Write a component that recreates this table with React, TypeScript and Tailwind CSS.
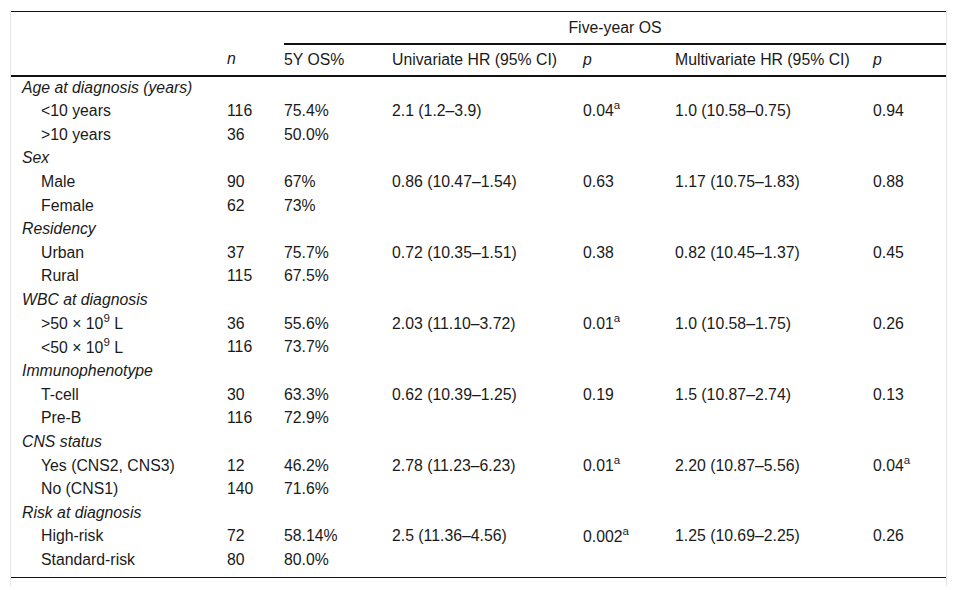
import React from "react";

type Row =
  | { kind: "cat"; label: string }
  | {
      kind: "item";
      label: React.ReactNode;
      n: string;
      os: string;
      uni?: string;
      p1?: React.ReactNode;
      multi?: string;
      p2?: React.ReactNode;
    };

const Sup = ({ children }: { children: React.ReactNode }) => (
  <sup className="text-[11.5px] relative top-[-1px] align-super leading-none">{children}</sup>
);

const rows: Row[] = [
  { kind: "cat", label: "Age at diagnosis (years)" },
  { kind: "item", label: "<10 years", n: "116", os: "75.4%", uni: "2.1 (1.2–3.9)", p1: <>0.04<Sup>a</Sup></>, multi: "1.0 (10.58–0.75)", p2: "0.94" },
  { kind: "item", label: ">10 years", n: "36", os: "50.0%" },
  { kind: "cat", label: "Sex" },
  { kind: "item", label: "Male", n: "90", os: "67%", uni: "0.86 (10.47–1.54)", p1: "0.63", multi: "1.17 (10.75–1.83)", p2: "0.88" },
  { kind: "item", label: "Female", n: "62", os: "73%" },
  { kind: "cat", label: "Residency" },
  { kind: "item", label: "Urban", n: "37", os: "75.7%", uni: "0.72 (10.35–1.51)", p1: "0.38", multi: "0.82 (10.45–1.37)", p2: "0.45" },
  { kind: "item", label: "Rural", n: "115", os: "67.5%" },
  { kind: "cat", label: "WBC at diagnosis" },
  { kind: "item", label: <>&gt;50 × 10<Sup>9</Sup> L</>, n: "36", os: "55.6%", uni: "2.03 (11.10–3.72)", p1: <>0.01<Sup>a</Sup></>, multi: "1.0 (10.58–1.75)", p2: "0.26" },
  { kind: "item", label: <>&lt;50 × 10<Sup>9</Sup> L</>, n: "116", os: "73.7%" },
  { kind: "cat", label: "Immunophenotype" },
  { kind: "item", label: "T-cell", n: "30", os: "63.3%", uni: "0.62 (10.39–1.25)", p1: "0.19", multi: "1.5 (10.87–2.74)", p2: "0.13" },
  { kind: "item", label: "Pre-B", n: "116", os: "72.9%" },
  { kind: "cat", label: "CNS status" },
  { kind: "item", label: "Yes (CNS2, CNS3)", n: "12", os: "46.2%", uni: "2.78 (11.23–6.23)", p1: <>0.01<Sup>a</Sup></>, multi: "2.20 (10.87–5.56)", p2: <>0.04<Sup>a</Sup></> },
  { kind: "item", label: "No (CNS1)", n: "140", os: "71.6%" },
  { kind: "cat", label: "Risk at diagnosis" },
  { kind: "item", label: "High-risk", n: "72", os: "58.14%", uni: "2.5 (11.36–4.56)", p1: <>0.002<Sup>a</Sup></>, multi: "1.25 (10.69–2.25)", p2: "0.26" },
  { kind: "item", label: "Standard-risk", n: "80", os: "80.0%" },
];

export default function App() {
  return (
    <div
      className="bg-white w-[957px] h-[590px] pt-[10px] pl-[10px] text-[15.8px] leading-[18px] text-[#1a1a1a]"
      style={{ fontFamily: '"Liberation Sans", Arial, sans-serif' }}
    >
      <div className="w-[937px] h-[576px] border-l border-r border-[#e6e6e6] pt-[1px]">
        <table className="border-collapse w-[935px] table-fixed">
          <colgroup>
            <col className="w-[216px]" />
            <col className="w-[57px]" />
            <col className="w-[108px]" />
            <col className="w-[191px]" />
            <col className="w-[92px]" />
            <col className="w-[198px]" />
            <col className="w-[73px]" />
          </colgroup>
          <thead>
            <tr className="h-[32px] border-t border-[#111]">
              <th colSpan={2} />
              <th colSpan={5} className="font-normal text-center border-b-2 border-[#111] align-middle pt-[1px]">
                Five-year OS
              </th>
            </tr>
            <tr className="h-[32px] border-b-2 border-[#111]">
              <th />
              <th className="font-normal italic text-left">n</th>
              <th className="font-normal text-left">5Y OS%</th>
              <th className="font-normal text-left">Univariate HR (95% CI)</th>
              <th className="font-normal italic text-left">p</th>
              <th className="font-normal text-left">Multivariate HR (95% CI)</th>
              <th className="font-normal italic text-left">p</th>
            </tr>
          </thead>
          <tbody className="border-b border-[#111]">
            {rows.map((r, i) =>
              r.kind === "cat" ? (
                <tr key={i} className="h-[23.65px]">
                  <td colSpan={7} className="italic pl-[11px] whitespace-nowrap">
                    {r.label}
                  </td>
                </tr>
              ) : (
                <tr key={i} className="h-[23.65px]">
                  <td className="pl-[30px] whitespace-nowrap">{r.label}</td>
                  <td>{r.n}</td>
                  <td>{r.os}</td>
                  <td className="whitespace-nowrap">{r.uni}</td>
                  <td className="whitespace-nowrap">{r.p1}</td>
                  <td className="whitespace-nowrap">{r.multi}</td>
                  <td className="whitespace-nowrap">{r.p2}</td>
                </tr>
              )
            )}
            <tr className="h-[6px]">
              <td colSpan={7} />
            </tr>
          </tbody>
        </table>
      </div>
    </div>
  );
}
